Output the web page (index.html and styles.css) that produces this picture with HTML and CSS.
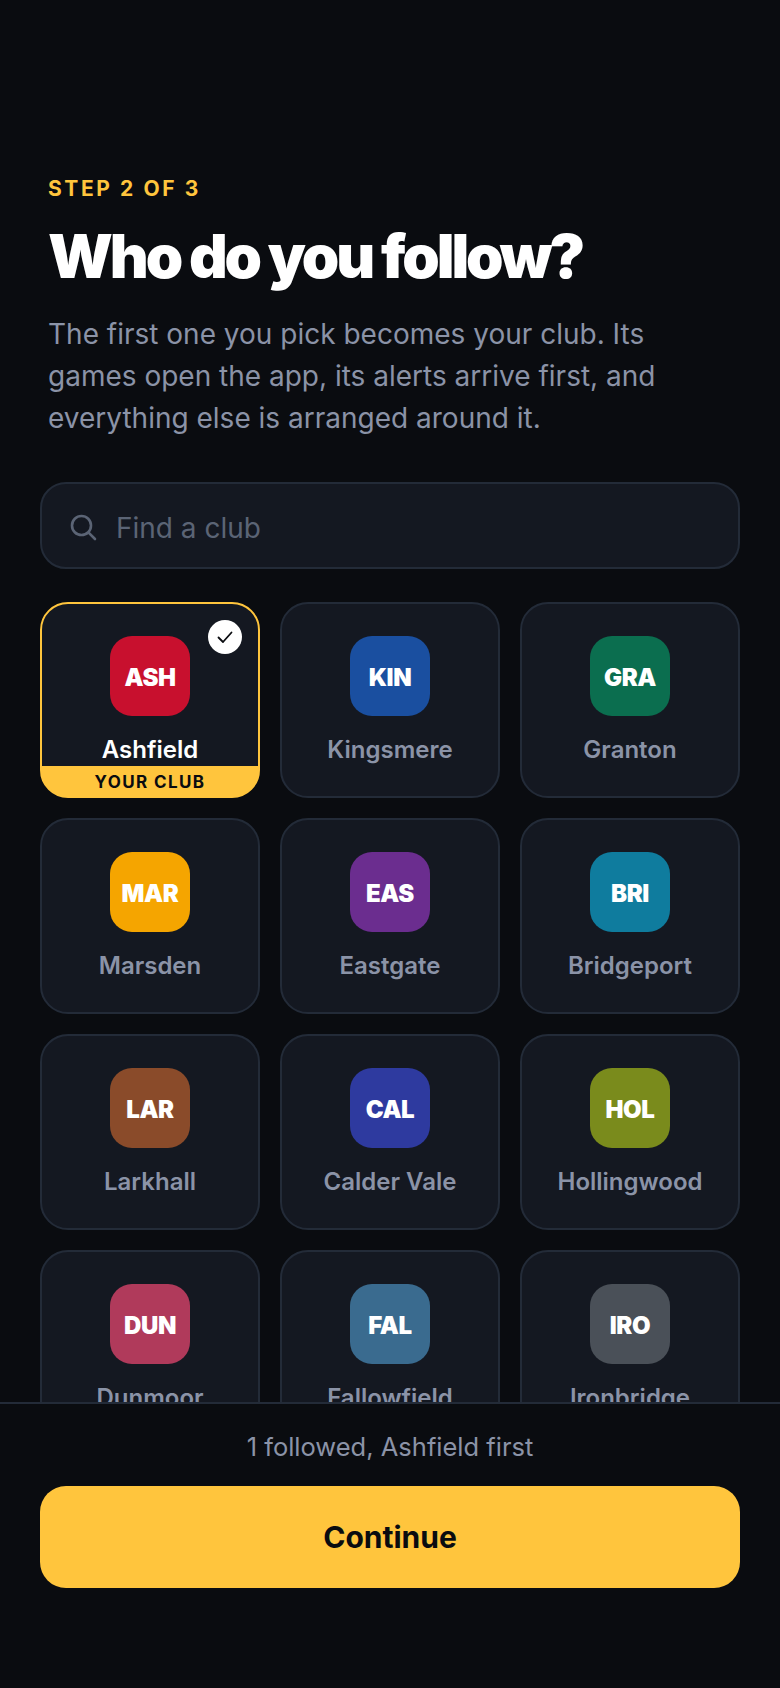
FILE: index.html
```html
<!DOCTYPE html>
<html>
    <head>
        <meta charset="UTF-8">
        <title>Who do you follow?</title>
        <link rel="stylesheet" href="styles.css">
    </head>
    <body>
        <div class="onboarding-app">
            <div class="onboarding-content">
                <div class="onboarding-intro">
                    <div class="onboarding-step">STEP 2 OF 3</div>
                    <h1>Who do you follow?</h1>
                    <p>The first one you pick becomes your club. Its games open the app, its alerts arrive first, and everything else is arranged around it.</p>
                </div>
                <div class="club-search">
                    <svg class="club-search-icon" viewBox="0 0 28 28" fill="none" stroke="currentColor" stroke-width="2.6" stroke-linecap="round">
                        <circle cx="11.5" cy="11.5" r="9.5"></circle>
                        <path d="M18.6 18.6 25 25"></path>
                    </svg>
                    <span>Find a club</span>
                </div>
                <ul class="club-grid">
                    <li class="club-card is-primary">
                        <div class="club-check">
                            <svg viewBox="0 0 20 20" fill="none" stroke="currentColor" stroke-width="1.8" stroke-linecap="round" stroke-linejoin="round">
                                <path d="M3.5 10.5 8 15 16.5 5.5"></path>
                            </svg>
                        </div>
                        <div class="club-badge is-ash">ASH</div>
                        <div class="club-name">Ashfield</div>
                        <div class="club-tag">YOUR CLUB</div>
                    </li>
                    <li class="club-card">
                        <div class="club-badge is-kin">KIN</div>
                        <div class="club-name">Kingsmere</div>
                    </li>
                    <li class="club-card">
                        <div class="club-badge is-gra">GRA</div>
                        <div class="club-name">Granton</div>
                    </li>
                    <li class="club-card">
                        <div class="club-badge is-mar">MAR</div>
                        <div class="club-name">Marsden</div>
                    </li>
                    <li class="club-card">
                        <div class="club-badge is-eas">EAS</div>
                        <div class="club-name">Eastgate</div>
                    </li>
                    <li class="club-card">
                        <div class="club-badge is-bri">BRI</div>
                        <div class="club-name">Bridgeport</div>
                    </li>
                    <li class="club-card">
                        <div class="club-badge is-lar">LAR</div>
                        <div class="club-name">Larkhall</div>
                    </li>
                    <li class="club-card">
                        <div class="club-badge is-cal">CAL</div>
                        <div class="club-name">Calder Vale</div>
                    </li>
                    <li class="club-card">
                        <div class="club-badge is-hol">HOL</div>
                        <div class="club-name">Hollingwood</div>
                    </li>
                    <li class="club-card">
                        <div class="club-badge is-dun">DUN</div>
                        <div class="club-name">Dunmoor</div>
                    </li>
                    <li class="club-card">
                        <div class="club-badge is-fal">FAL</div>
                        <div class="club-name">Fallowfield</div>
                    </li>
                    <li class="club-card">
                        <div class="club-badge is-iro">IRO</div>
                        <div class="club-name">Ironbridge</div>
                    </li>
                </ul>
            </div>
            <div class="onboarding-footer">
                <div class="onboarding-count">1 followed, Ashfield first</div>
                <button class="onboarding-continue">Continue</button>
            </div>
        </div>
    </body>
</html>
```

FILE: styles.css
```css
* {
    padding: 0;
    margin: 0;
    box-sizing: border-box;
}

html, body {
    height: 100%;
    width: 100%;
}

body {
    background-color: #0a0c10;
    font-family: "Inter", "Liberation Sans", sans-serif;
}

.onboarding-app {
    display: flex;
    flex-direction: column;
    height: 100%;
    width: 100%;
    overflow: hidden;
}

.onboarding-content {
    flex: 1;
    min-height: 0;
    overflow: hidden;
    padding: 177px 40px 0;
}

.onboarding-intro {
    padding: 0 8px;
}

.onboarding-step {
    color: #ffc53d;
    font-size: 21px;
    font-weight: 700;
    line-height: 24px;
    letter-spacing: 2.6px;
}

.onboarding-intro h1 {
    color: #ffffff;
    font-size: 60px;
    font-weight: 900;
    line-height: 66px;
    letter-spacing: -3.1px;
    margin-top: 22px;
}

.onboarding-intro p {
    color: #8b93a7;
    font-size: 28px;
    line-height: 42px;
    margin-top: 24px;
}

.club-search {
    display: flex;
    align-items: center;
    gap: 18px;
    height: 87px;
    margin-top: 43px;
    padding: 4px 28px 0;
    background-color: #141821;
    border: 2px solid #232b38;
    border-radius: 26px;
    color: #5b6475;
    font-size: 28px;
}

.club-search-icon {
    height: 28px;
    width: 28px;
}

.club-grid {
    display: grid;
    grid-template-columns: repeat(3, 1fr);
    gap: 20px;
    margin-top: 33px;
    list-style: none;
}

.club-card {
    position: relative;
    display: flex;
    flex-direction: column;
    align-items: center;
    height: 196px;
    padding-top: 32px;
    background-color: #141821;
    border: 2px solid #232b38;
    border-radius: 28px;
    overflow: hidden;
}

.club-card.is-primary {
    background: linear-gradient(#141821 162px, #ffc53d 162px);
    border-color: #ffc53d;
}

.club-badge {
    display: flex;
    align-items: center;
    justify-content: center;
    height: 80px;
    width: 80px;
    padding-top: 2px;
    border-radius: 22px;
    color: #ffffff;
    font-size: 24px;
    font-weight: 900;
    letter-spacing: -0.4px;
}

.club-name {
    margin-top: 17px;
    color: #8b93a7;
    font-size: 24px;
    font-weight: 600;
    line-height: 34px;
}

.is-primary .club-name {
    color: #ffffff;
}

.club-check {
    position: absolute;
    top: 16px;
    right: 16px;
    display: flex;
    align-items: center;
    justify-content: center;
    height: 34px;
    width: 34px;
    border-radius: 50%;
    background-color: #ffffff;
    color: #0a0c10;
}

.club-check svg {
    height: 20px;
    width: 20px;
}

.club-tag {
    position: absolute;
    left: 0;
    right: 0;
    bottom: 0;
    height: 30px;
    color: #0a0c10;
    font-size: 17px;
    font-weight: 700;
    line-height: 32px;
    letter-spacing: 1.4px;
    text-align: center;
}

.is-ash { background-color: #c8102e; }
.is-kin { background-color: #1a4fa0; }
.is-gra { background-color: #0b6e4f; }
.is-mar { background-color: #f5a500; }
.is-eas { background-color: #6b2d8f; }
.is-bri { background-color: #0f7c9e; }
.is-lar { background-color: #8a4b2a; }
.is-cal { background-color: #2e3a9f; }
.is-hol { background-color: #7a8b1c; }
.is-dun { background-color: #b03a5b; }
.is-fal { background-color: #3a6b8f; }
.is-iro { background-color: #4a5058; }

.onboarding-footer {
    padding: 27px 40px 100px;
    background-color: #0a0c10;
    border-top: 2px solid #232b38;
}

.onboarding-count {
    color: #8b93a7;
    font-size: 25.5px;
    line-height: 32px;
    text-align: center;
}

.onboarding-continue {
    display: block;
    height: 102px;
    width: 100%;
    margin-top: 23px;
    border: none;
    border-radius: 26px;
    background-color: #ffc53d;
    color: #0a0c10;
    font-family: inherit;
    font-size: 30px;
    font-weight: 700;
}
```
